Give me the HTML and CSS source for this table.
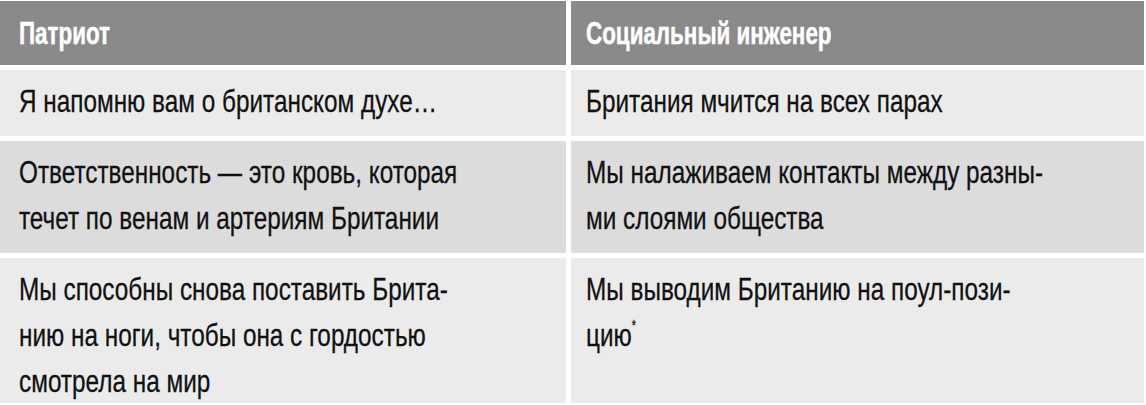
FILE: index.html
```html
<!DOCTYPE html>
<html lang="ru">
<head>
<meta charset="utf-8">
<title>Патриот / Социальный инженер</title>
<link rel="stylesheet" href="styles.css">
</head>
<body>
<div class="table">
  <div class="cell head left"><span class="txt">Патриот</span></div>
  <div class="cell head right"><span class="txt">Социальный инженер</span></div>

  <div class="cell light left"><span class="txt">Я напомню вам о британском духе…</span></div>
  <div class="cell light right"><span class="txt">Британия мчится на всех парах</span></div>

  <div class="cell dark left"><span class="txt">Ответственность — это кровь, которая<br>течет по венам и артериям Британии</span></div>
  <div class="cell dark right"><span class="txt">Мы налаживаем контакты между разны-<br>ми слоями общества</span></div>

  <div class="cell light left tall"><span class="txt">Мы способны снова поставить Брита-<br>нию на ноги, чтобы она с гордостью<br>смотрела на мир</span></div>
  <div class="cell light right tall"><span class="txt">Мы выводим Британию на поул-пози-<br>цию<sup class="note">*</sup></span></div>
</div>
</body>
</html>
```
FILE: styles.css
```css
html, body {
  margin: 0;
  padding: 0;
  background: #ffffff;
}
body {
  overflow: hidden;
}
.table {
  margin-top: 1px;
  width: 1144px;
  display: grid;
  grid-template-columns: 566px 573px;
  column-gap: 5px;
  row-gap: 5px;
  font-family: "Liberation Sans", Arial, sans-serif;
  font-size: 32px;
  line-height: 46px;
  color: #111111;
}
.cell {
  padding: 8px 0 12px 19px;
  overflow: hidden;
}
.cell.right {
  padding-left: 15px;
}
.txt {
  display: inline-block;
  white-space: nowrap;
  transform: scaleX(0.76);
  transform-origin: 0 0;
  -webkit-text-stroke: 0.3px #111111;
}
.head {
  height: 64px;
  box-sizing: border-box;
  padding-top: 0;
  padding-bottom: 0;
  display: flex;
  align-items: center;
  background: #8a8a8a;
  color: #ffffff;
  font-weight: bold;
}
.head .txt {
  transform: scaleX(0.70);
  transform-origin: 0 50%;
  -webkit-text-stroke: 0.5px #ffffff;
}
.tall {
  height: 145px;
  box-sizing: border-box;
  padding-bottom: 0;
}
.light {
  background: #ebebeb;
}
.dark {
  background: #dcdcdc;
}
.note {
  font-size: 14px;
  line-height: 0;
  vertical-align: 16px;
}
```
